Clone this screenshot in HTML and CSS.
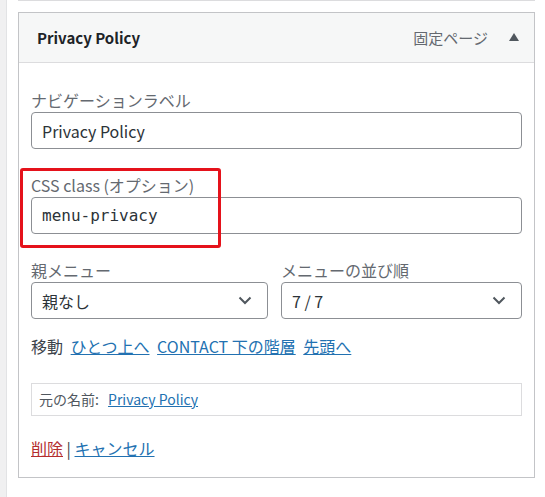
FILE: index.html
```html
<!DOCTYPE html>
<html lang="ja">
<head>
    <meta charset="UTF-8">
    <title>メニュー項目</title>
    <link rel="stylesheet" href="styles.css">
</head>
<body>
<div class="screen">
    <div class="side-strip"></div>

    <div class="menu-items">
        <div class="menu-item-prev"></div>

        <div class="menu-item">
            <div class="item-bar">
                <span class="item-title">Privacy Policy</span>
                <span class="item-controls">
                    <span class="item-type">固定ページ</span>
                    <svg class="item-toggle" width="10" height="8" viewBox="0 0 10 8"><polygon points="5,0 10,8 0,8" fill="#50575e"/></svg>
                </span>
            </div>

            <div class="item-settings">
                <div class="field">
                    <label class="field-label" for="edit-title">ナビゲーションラベル</label>
                    <input class="text-input" id="edit-title" type="text" value="Privacy Policy">
                </div>

                <div class="field field-css">
                    <label class="field-label" for="edit-classes">CSS class (オプション)</label>
                    <input class="text-input code" id="edit-classes" type="text" value="menu-privacy">
                    <div class="highlight-frame"></div>
                </div>

                <div class="field-row">
                    <div class="field">
                        <label class="field-label" for="edit-parent">親メニュー</label>
                        <div class="select-wrap">
                            <select class="select-input" id="edit-parent"><option>親なし</option></select>
                            <svg class="chevron" width="14" height="9" viewBox="0 0 14 9"><polyline points="1.5,1.5 7,7 12.5,1.5" fill="none" stroke="#50575e" stroke-width="2"/></svg>
                        </div>
                    </div>
                    <div class="field">
                        <label class="field-label" for="edit-order">メニューの並び順</label>
                        <div class="select-wrap">
                            <select class="select-input" id="edit-order"><option>7 / 7</option></select>
                            <svg class="chevron" width="14" height="9" viewBox="0 0 14 9"><polyline points="1.5,1.5 7,7 12.5,1.5" fill="none" stroke="#50575e" stroke-width="2"/></svg>
                        </div>
                    </div>
                </div>

                <div class="field-move">
                    <span class="move-label">移動</span>
                    <a href="#">ひとつ上へ</a>
                    <a href="#">CONTACT 下の階層</a>
                    <a href="#">先頭へ</a>
                </div>

                <div class="original-name">
                    元の名前: <a href="#">Privacy Policy</a>
                </div>

                <div class="item-actions">
                    <a class="item-delete" href="#">削除</a> | <a href="#">キャンセル</a>
                </div>
            </div>
        </div>
    </div>
</div>
</body>
</html>
```

FILE: styles.css
```css
/* base */
html, body {
    margin: 0;
    height: 100%;
    background: #fff;
    font-family: "Noto Sans CJK JP", "Noto Sans", sans-serif;
    color: #3c434a;
}

.screen {
    display: flex;
    min-height: 100%;
}

.side-strip {
    width: 6px;
    flex: none;
    background: #f0f0f1;
    border-right: 1px solid #e2e3e5;
}

.menu-items {
    flex: 1;
    padding: 0 10px 0 11px;
}

/* the item above, only its bottom edge shows */
.menu-item-prev {
    height: 0;
    border-bottom: 1px solid #dcdcde;
}

.menu-item {
    margin-top: 11px;
    border: 1px solid #c3c4c7;
}

/* item header */
.item-bar {
    display: flex;
    align-items: center;
    justify-content: space-between;
    height: 49px;
    padding: 0 15px 0 18px;
    background: #f6f7f7;
    border-bottom: 1px solid #dcdcde;
}

.item-title {
    font-size: 15px;
    font-weight: 700;
    color: #1d2327;
}

.item-controls {
    display: flex;
    align-items: center;
    gap: 21px;
}

.item-type {
    font-size: 15px;
    color: #646970;
}

.item-toggle {
    margin-top: -2px;
}

/* settings body */
.item-settings {
    padding: 25px 12px 17px;
}

.field {
    position: relative;
    margin-bottom: 24px;
}

.field-label {
    display: block;
    font-size: 16px;
    line-height: 24px;
    color: #646970;
}

.text-input,
.select-input {
    display: block;
    box-sizing: border-box;
    width: 100%;
    height: 37px;
    margin: 0;
    padding: 0 10px;
    border: 1px solid #8c8f94;
    border-radius: 4px;
    background: #fff;
    font-family: inherit;
    font-size: 16px;
    color: #2c3338;
}

.text-input.code {
    font-family: "DejaVu Sans Mono", "Liberation Mono", monospace;
    font-size: 16px;
}

/* red marker frame around the class field */
.highlight-frame {
    position: absolute;
    left: -11px;
    top: -5px;
    width: 201px;
    height: 80px;
    box-sizing: border-box;
    border: 3px solid #e5121b;
    border-radius: 3px;
}

.field-row {
    display: grid;
    grid-template-columns: 237px 1fr;
    gap: 13px;
}

.field-row .field {
    margin-bottom: 15px;
}

.select-wrap {
    position: relative;
}

.select-input {
    appearance: none;
    -webkit-appearance: none;
}

.chevron {
    position: absolute;
    right: 16px;
    top: 14px;
    pointer-events: none;
}

/* move links */
.field-move {
    font-size: 16px;
    line-height: 24px;
    color: #3c434a;
}

.field-move a {
    margin-left: 4px;
}

a {
    color: #2271b1;
    text-decoration: underline;
}

.original-name {
    margin-top: 25px;
    padding: 5px 7px;
    border: 1px solid #dcdcde;
    font-size: 14px;
    line-height: 21px;
    color: #50575e;
}

.original-name a {
    margin-left: 6px;
}

.item-actions {
    margin-top: 20px;
    font-size: 16px;
    line-height: 24px;
    color: #3c434a;
}

.item-actions .item-delete {
    color: #b32d2e;
}
```
